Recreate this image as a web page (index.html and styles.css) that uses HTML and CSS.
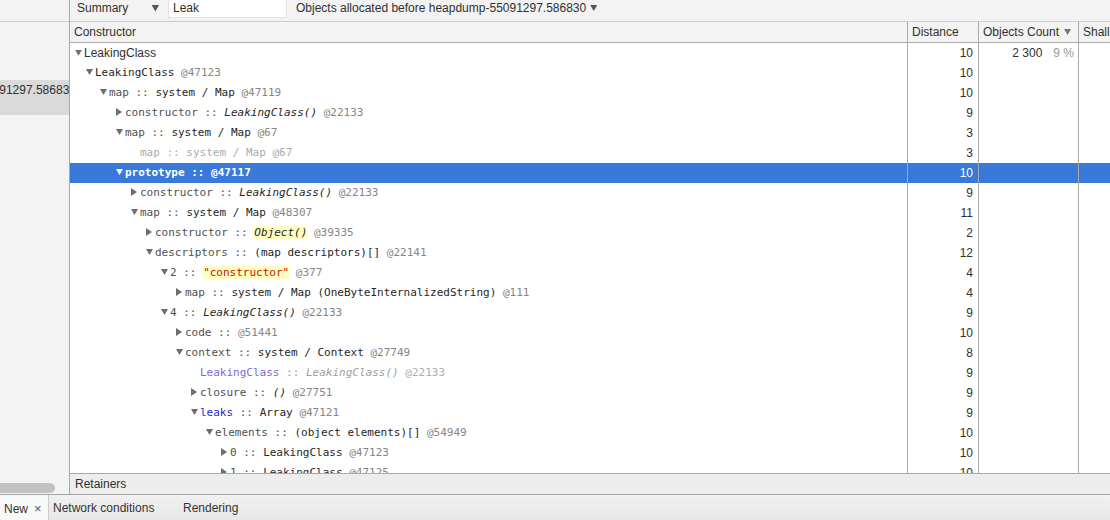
FILE: index.html
```html
<!DOCTYPE html>
<html>
<head>
<meta charset="utf-8">
<link rel="stylesheet" href="styles.css">
</head>
<body>
<div class="app">
  <div class="main">
    <aside class="sidebar">
      <div class="sb-top"></div>
      <div class="sb-item"><span>heapdump-55091297.586830</span></div>
      <div class="sb-fill"></div>
      <div class="sb-scroll"></div>
    </aside>
    <section class="content">
      <div class="toolbar">
        <div class="select">Summary<i class="tri"></i></div>
        <div class="filter">Leak</div>
        <div class="select2">Objects allocated before heapdump-55091297.586830<i class="tri sm"></i></div>
      </div>
      <div class="grid-row hdr">
        <div class="c c1">Constructor</div>
        <div class="c c2">Distance</div>
        <div class="c c3">Objects Count<i class="tri hdr-tri"></i></div>
        <div class="c c4">Shallow Size</div>
      </div>
      <div class="body">
        <div class="grid-row row">
          <div class="c c1 tree sans l0"><i class="ar down"></i>LeakingClass</div>
          <div class="c c2 num">10</div>
          <div class="c c3 num">2 300<span class="pct">9 %</span></div>
          <div class="c c4"></div>
        </div>
        <div class="grid-row row">
          <div class="c c1 tree l1"><i class="ar down"></i><span class="v">LeakingClass</span> <span class="id">@47123</span></div>
          <div class="c c2 num">10</div><div class="c c3"></div><div class="c c4"></div>
        </div>
        <div class="grid-row row">
          <div class="c c1 tree l2"><i class="ar down"></i><span class="n">map ::</span> <span class="v">system / Map</span> <span class="id">@47119</span></div>
          <div class="c c2 num">10</div><div class="c c3"></div><div class="c c4"></div>
        </div>
        <div class="grid-row row">
          <div class="c c1 tree l3"><i class="ar right"></i><span class="n">constructor ::</span> <em class="v">LeakingClass()</em> <span class="id">@22133</span></div>
          <div class="c c2 num">9</div><div class="c c3"></div><div class="c c4"></div>
        </div>
        <div class="grid-row row">
          <div class="c c1 tree l3"><i class="ar down"></i><span class="n">map ::</span> <span class="v">system / Map</span> <span class="id">@67</span></div>
          <div class="c c2 num">3</div><div class="c c3"></div><div class="c c4"></div>
        </div>
        <div class="grid-row row">
          <div class="c c1 tree l4 dim"><i class="ar none"></i>map :: system / Map @67</div>
          <div class="c c2 num">3</div><div class="c c3"></div><div class="c c4"></div>
        </div>
        <div class="grid-row row sel">
          <div class="c c1 tree l3"><i class="ar down"></i>prototype :: @47117</div>
          <div class="c c2 num">10</div><div class="c c3"></div><div class="c c4"></div>
        </div>
        <div class="grid-row row">
          <div class="c c1 tree l4"><i class="ar right"></i><span class="n">constructor ::</span> <em class="v">LeakingClass()</em> <span class="id">@22133</span></div>
          <div class="c c2 num">9</div><div class="c c3"></div><div class="c c4"></div>
        </div>
        <div class="grid-row row">
          <div class="c c1 tree l4"><i class="ar down"></i><span class="n">map ::</span> <span class="v">system / Map</span> <span class="id">@48307</span></div>
          <div class="c c2 num">11</div><div class="c c3"></div><div class="c c4"></div>
        </div>
        <div class="grid-row row">
          <div class="c c1 tree l5"><i class="ar right"></i><span class="n">constructor ::</span> <em class="v hl">Object()</em> <span class="id">@39335</span></div>
          <div class="c c2 num">2</div><div class="c c3"></div><div class="c c4"></div>
        </div>
        <div class="grid-row row">
          <div class="c c1 tree l5"><i class="ar down"></i><span class="n">descriptors ::</span> <span class="v">(map descriptors)[]</span> <span class="id">@22141</span></div>
          <div class="c c2 num">12</div><div class="c c3"></div><div class="c c4"></div>
        </div>
        <div class="grid-row row">
          <div class="c c1 tree l6"><i class="ar down"></i><span class="n">2 ::</span> <span class="str hl">"constructor"</span> <span class="id">@377</span></div>
          <div class="c c2 num">4</div><div class="c c3"></div><div class="c c4"></div>
        </div>
        <div class="grid-row row">
          <div class="c c1 tree l7"><i class="ar right"></i><span class="n">map ::</span> <span class="v">system / Map (OneByteInternalizedString)</span> <span class="id">@111</span></div>
          <div class="c c2 num">4</div><div class="c c3"></div><div class="c c4"></div>
        </div>
        <div class="grid-row row">
          <div class="c c1 tree l6"><i class="ar down"></i><span class="n">4 ::</span> <em class="v">LeakingClass()</em> <span class="id">@22133</span></div>
          <div class="c c2 num">9</div><div class="c c3"></div><div class="c c4"></div>
        </div>
        <div class="grid-row row">
          <div class="c c1 tree l7"><i class="ar right"></i><span class="n">code ::</span> <span class="id">@51441</span></div>
          <div class="c c2 num">10</div><div class="c c3"></div><div class="c c4"></div>
        </div>
        <div class="grid-row row">
          <div class="c c1 tree l7"><i class="ar down"></i><span class="n">context ::</span> <span class="v">system / Context</span> <span class="id">@27749</span></div>
          <div class="c c2 num">8</div><div class="c c3"></div><div class="c c4"></div>
        </div>
        <div class="grid-row row">
          <div class="c c1 tree l8 ctxrow"><i class="ar none"></i><span class="ctx">LeakingClass</span> :: <em>LeakingClass()</em> <span class="id2">@22133</span></div>
          <div class="c c2 num">9</div><div class="c c3"></div><div class="c c4"></div>
        </div>
        <div class="grid-row row">
          <div class="c c1 tree l8"><i class="ar right"></i><span class="n">closure ::</span> <em class="v">()</em> <span class="id">@27751</span></div>
          <div class="c c2 num">9</div><div class="c c3"></div><div class="c c4"></div>
        </div>
        <div class="grid-row row">
          <div class="c c1 tree l8"><i class="ar down"></i><span class="blue">leaks</span> <span class="n">::</span> <span class="v">Array</span> <span class="id">@47121</span></div>
          <div class="c c2 num">9</div><div class="c c3"></div><div class="c c4"></div>
        </div>
        <div class="grid-row row">
          <div class="c c1 tree l9"><i class="ar down"></i><span class="n">elements ::</span> <span class="v">(object elements)[]</span> <span class="id">@54949</span></div>
          <div class="c c2 num">10</div><div class="c c3"></div><div class="c c4"></div>
        </div>
        <div class="grid-row row">
          <div class="c c1 tree l10"><i class="ar right"></i><span class="n">0 ::</span> <span class="v">LeakingClass</span> <span class="id">@47123</span></div>
          <div class="c c2 num">10</div><div class="c c3"></div><div class="c c4"></div>
        </div>
        <div class="grid-row row">
          <div class="c c1 tree l10"><i class="ar right"></i><span class="n">1 ::</span> <span class="v">LeakingClass</span> <span class="id">@47125</span></div>
          <div class="c c2 num">10</div><div class="c c3"></div><div class="c c4"></div>
        </div>
      </div>
      <div class="retainers">Retainers</div>
    </section>
  </div>
  <div class="tabbar">
    <div class="tab active">New<span class="x">×</span></div>
    <div class="tab net">Network conditions</div>
    <div class="tab">Rendering</div>
  </div>
</div>
</body>
</html>
```

FILE: styles.css
```css
* { box-sizing: border-box; }
html, body { margin: 0; padding: 0; }
body {
  width: 1110px;
  height: 520px;
  overflow: hidden;
  font: 12px "Liberation Sans", Arial, sans-serif;
  color: #303030;
  background: #fff;
}
.app { display: flex; flex-direction: column; height: 520px; }
.main {
  display: flex;
  height: 495px;
  border-bottom: 1px solid #a5a5a5;
  flex-shrink: 0;
}

/* sidebar */
.sidebar {
  width: 70px;
  flex-shrink: 0;
  border-right: 1px solid #a8a8a8;
  background: #f3f3f3;
  display: flex;
  flex-direction: column;
  overflow: hidden;
}
.sb-top { height: 22px; border-bottom: 1px solid #cdcdcd; flex-shrink: 0; }
.sb-item {
  margin-top: 58px;
  height: 35px;
  background: #dadada;
  display: flex;
  justify-content: flex-end;
  overflow: hidden;
  flex-shrink: 0;
}
.sb-item span {
  white-space: nowrap;
  flex-shrink: 0;
  margin-right: -7px;
  line-height: 14px;
  padding-top: 3px;
}
.sb-fill { flex: 1; }
.sb-scroll {
  height: 10px;
  width: 61px;
  margin-left: -6px;
  margin-bottom: 1px;
  background: #c2c2c2;
  border-radius: 5px;
  flex-shrink: 0;
}

/* content */
.content { flex: 1; min-width: 0; display: flex; flex-direction: column; overflow: hidden; }
.toolbar {
  height: 22px;
  border-bottom: 1px solid #cdcdcd;
  background: #f3f3f3;
  display: flex;
  align-items: flex-start;
  flex-shrink: 0;
  line-height: 16px;
  white-space: nowrap;
}
.select { padding-left: 7px; width: 98px; display: flex; align-items: center; }
.select .tri { margin-left: 23px; }
.tri {
  display: inline-block;
  width: 8px;
  height: 7px;
  background: #555;
  clip-path: polygon(0 0, 100% 0, 50% 100%);
}
.tri.sm { width: 7px; height: 6px; margin-left: 4px; }
.select2 { margin-left: 9px; display: flex; align-items: center; }
.filter {
  width: 119px;
  height: 18px;
  background: #fff;
  border: 1px solid #e2e2e2;
  border-top: none;
  padding-left: 4px;
}

/* grid */
.grid-row {
  display: grid;
  grid-template-columns: 838px 71px 100px 1fr;
}
.c {
  border-right: 1px solid #a9a9a9;
  overflow: hidden;
  white-space: nowrap;
}
.c4 { border-right: none; }
.hdr {
  height: 21px;
  border-bottom: 1px solid #a9a9a9;
  background: #f3f3f3;
  line-height: 19px;
  flex-shrink: 0;
}
.hdr .c { padding-left: 4px; display: flex; align-items: center; }
.hdr-tri { width: 7px; height: 6px; background: #777; margin-left: 5px; }
.body { flex: 1; overflow: hidden; }
.row { height: 20px; line-height: 20px; }
.num { text-align: right; padding-right: 5px; }
.c3.num { padding-right: 4px; }
.pct { color: #999; margin-left: 11px; }

/* tree */
.tree {
  font-family: "DejaVu Sans Mono", Menlo, monospace;
  font-size: 11px;
  color: #505050;
}
.tree.sans { font-family: "Liberation Sans", Arial, sans-serif; font-size: 12px; color: #303030; }
.ar {
  display: inline-block;
  width: 9px;
  height: 8px;
  vertical-align: middle;
  position: relative;
  top: -1px;
}
.ar::before {
  content: "";
  display: block;
  background: #6e6e6e;
}
.ar.down::before {
  width: 7px; height: 6px; margin-top: 1px;
  clip-path: polygon(0 0, 100% 0, 50% 100%);
}
.ar.right::before {
  width: 6px; height: 8px;
  clip-path: polygon(0 0, 100% 50%, 0 100%);
}
.l0 { padding-left: 5px; }
.l1 { padding-left: 16px; }
.l2 { padding-left: 30px; }
.l3 { padding-left: 46px; }
.l4 { padding-left: 61px; }
.l5 { padding-left: 76px; }
.l6 { padding-left: 91px; }
.l7 { padding-left: 106px; }
.l8 { padding-left: 121px; }
.l9 { padding-left: 136px; }
.l10 { padding-left: 151px; }
.n { color: #505050; }
.v { color: #262626; }
em { font-style: italic; }
.id { color: #858585; }
.hl { background: #ffffc2; }
.str { color: #c80e0e; }
.blue { color: #1f1fd8; }
.dim { color: #ababab; }
.ctxrow { color: #a0a0a0; }
.ctx { color: #7b68e6; }
.id2 { color: #b0b0b0; }
.sel { background: #3879d9; color: #fff; }
.sel .c { color: #fff; }
.sel .tree { font-weight: bold; color: #fff; }
.sel .ar::before { background: #fff; }

/* retainers */
.retainers {
  height: 21px;
  border-top: 1px solid #a9a9a9;
  background: #ededed;
  padding-left: 5px;
  line-height: 20px;
  flex-shrink: 0;
}

/* tab bar */
.tabbar {
  height: 25px;
  display: flex;
  background: linear-gradient(#f1f1f1, #e7e7e7);
  line-height: 27px;
  color: #333;
  white-space: nowrap;
}
.tab { padding-left: 4px; }
.tab.active { width: 49px; border-right: 1px solid #cccccc; background: #f9f9f9; }
.x { margin-left: 6px; color: #555; font-size: 13px; }
.tab.net { width: 130px; }
```
